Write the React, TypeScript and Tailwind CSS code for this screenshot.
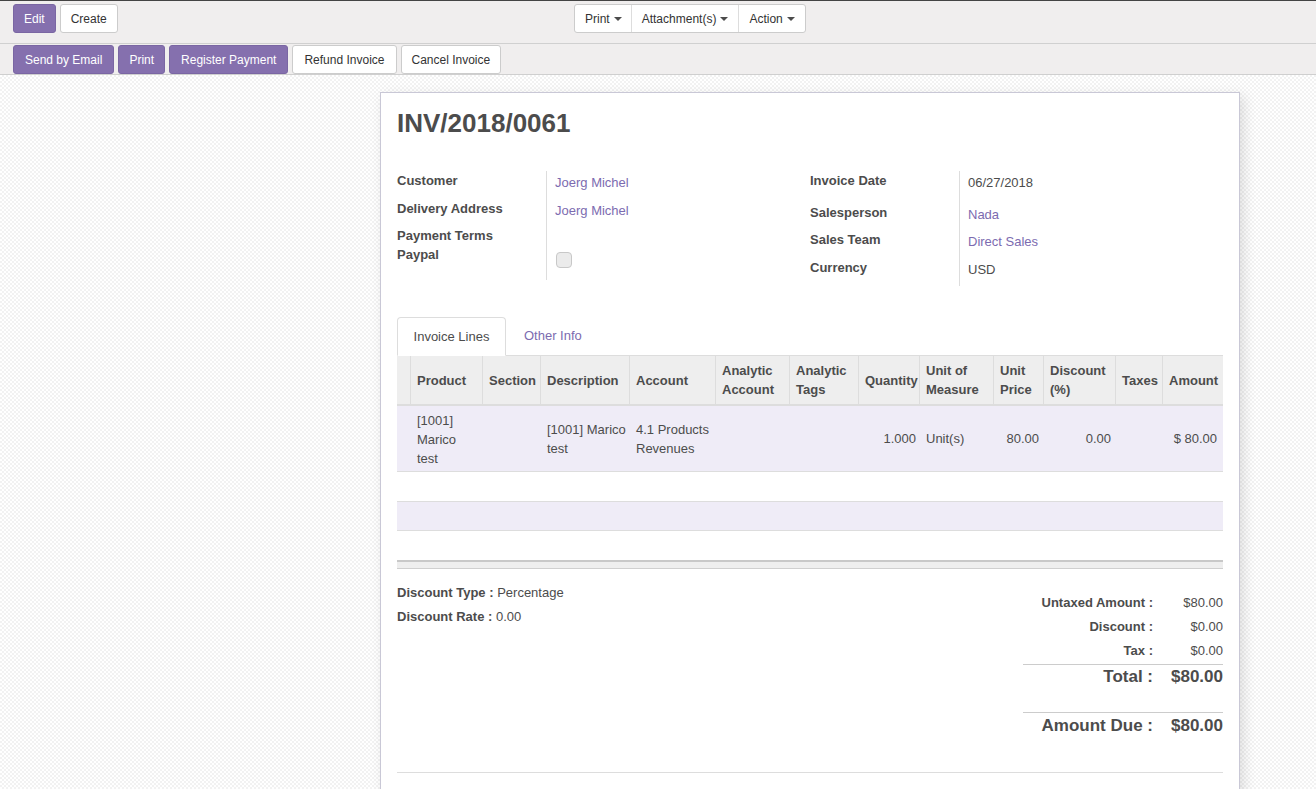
import React from "react";

const PURPLE = "bg-[#8570ae] border-[#7a66a3] text-white";
const WHITE = "bg-white border-[#cccccc] text-[#333333]";

function Btn({ label, primary, px = "px-[11px]" }: { label: string; primary?: boolean; px?: string }) {
  return (
    <button
      className={`h-[29px] ${px} rounded-[3px] border text-[12px] leading-none ${primary ? PURPLE : WHITE}`}
    >
      {label}
    </button>
  );
}

function Caret() {
  return (
    <span className="inline-block ml-[4px] align-middle w-0 h-0 border-l-[4px] border-r-[4px] border-t-[4px] border-l-transparent border-r-transparent border-t-[#4c4c4c]" />
  );
}

const cols = "grid grid-cols-[13px_72px_58px_89px_86px_74px_69px_61px_74px_50px_72px_47px_60px]";

const headers = [
  "",
  "Product",
  "Section",
  "Description",
  "Account",
  "Analytic Account",
  "Analytic Tags",
  "Quantity",
  "Unit of Measure",
  "Unit Price",
  "Discount (%)",
  "Taxes",
  "Amount",
];

export default function App() {
  return (
    <div className="w-[1316px] h-[789px] overflow-hidden font-['Liberation_Sans',Arial,sans-serif] text-[13px] text-[#4c4c4c] bg-white">
      {/* control panel */}
      <div className="h-[44px] bg-[#f0eeee] border-t border-[#444] border-b border-b-[#d0d0d0] flex items-start pt-[3px] px-[13px]">
        <div className="flex gap-[4px] w-[561px]">
          <Btn label="Edit" primary px="px-[10px]" />
          <Btn label="Create" px="px-[10px]" />
        </div>
        <div className="flex h-[29px] border border-[#cccccc] rounded-[3px] bg-white text-[12px] text-[#333]">
          <div className="pl-[10px] pr-[9px] flex items-center border-r border-[#dddddd]">
            Print
            <Caret />
          </div>
          <div className="px-[10px] flex items-center border-r border-[#dddddd]">
            Attachment(s)
            <Caret />
          </div>
          <div className="px-[10px] flex items-center">
            Action
            <Caret />
          </div>
        </div>
      </div>
      {/* status bar */}
      <div className="h-[31px] bg-[#f0eeee] border-b border-[#cfcfcf] flex items-start pt-[1px] px-[13px] gap-[4px]">
        <Btn label="Send by Email" primary />
        <Btn label="Print" primary px="px-[10px]" />
        <Btn label="Register Payment" primary />
        <Btn label="Refund Invoice" px="px-[11px]" />
        <Btn label="Cancel Invoice" px="px-[10px]" />
      </div>
      {/* sheet background */}
      <div className="h-[714px] bg-[conic-gradient(#f2f2f2_25%,#ffffff_0_50%,#f2f2f2_0_75%,#ffffff_0)] bg-[length:4px_4px] pt-[17px] pl-[380px]">
        <div className="w-[860px] h-[720px] bg-white border border-[#c9c8d6] shadow-[4px_4px_12px_rgba(0,0,0,0.12)] px-[16px] pt-[14px]">
          <h1 className="text-[26px] font-bold leading-[32px] text-[#4c4c4c]">INV/2018/0061</h1>

          {/* groups */}
          <div className="flex mt-[32px]">
            <div className="w-[413px] flex">
              <div className="w-[149px] font-bold">
                <div className="h-[28px]">Customer</div>
                <div className="h-[27px]">Delivery Address</div>
                <div className="h-[19px]">Payment Terms</div>
                <div className="h-[20px]">Paypal</div>
              </div>
              <div className="border-l border-[#dddddd] pl-[8px] h-[109px] text-[#7c6bb0] pt-[2px]">
                <div className="h-[28px]">Joerg Michel</div>
                <div className="h-[27px]">Joerg Michel</div>
                <div className="h-[24px]" />
                <div className="w-[16px] h-[16px] rounded-[4px] border border-[#c8c8c8] bg-[#ebebeb] ml-[1px]" />
              </div>
            </div>
            <div className="flex">
              <div className="w-[149px] font-bold">
                <div className="h-[32px]">Invoice Date</div>
                <div className="h-[27px]">Salesperson</div>
                <div className="h-[28px]">Sales Team</div>
                <div className="h-[20px]">Currency</div>
              </div>
              <div className="border-l border-[#dddddd] pl-[8px] h-[115px] pt-[2px]">
                <div className="h-[32px]">06/27/2018</div>
                <div className="h-[27px] text-[#7c6bb0]">Nada</div>
                <div className="h-[28px] text-[#7c6bb0]">Direct Sales</div>
                <div>USD</div>
              </div>
            </div>
          </div>

          {/* tabs */}
          <div className="mt-[30px] flex h-[39px] items-end">
            <div className="h-[39px] w-[109px] border border-[#dddddd] border-b-white rounded-t-[4px] flex items-center justify-center bg-white relative top-[1px]">
              Invoice Lines
            </div>
            <div className="h-[39px] px-[18px] flex items-center text-[#7c6bb0]">Other Info</div>
          </div>

          {/* table */}
          <div className="w-[826px] border-t border-[#dddddd]">
            <div className={`${cols} h-[50px] bg-[#eeeeee] border-b-2 border-[#dddddd] font-bold leading-[19px]`}>
              {headers.map((h, i) => (
                <div
                  key={i}
                  className={`flex items-center ${i === 0 ? "" : "border-l border-[#dddddd] pl-[6px]"}`}
                >
                  {h}
                </div>
              ))}
            </div>
            <div className={`${cols} h-[66px] bg-[#efecf7] border-b border-[#dddddd] leading-[19px]`}>
              <div />
              <div className="pl-[7px] pt-[5px]">
                [1001]
                <br />
                Marico
                <br />
                test
              </div>
              <div />
              <div className="pl-[7px] flex items-center">[1001] Marico test</div>
              <div className="pl-[7px] flex items-center">4.1 Products Revenues</div>
              <div />
              <div />
              <div className="px-[3px] flex items-center justify-end">1.000</div>
              <div className="px-[7px] flex items-center">Unit(s)</div>
              <div className="px-[4px] flex items-center justify-end">80.00</div>
              <div className="px-[4px] flex items-center justify-end">0.00</div>
              <div />
              <div className="px-[5px] flex items-center justify-end">$ 80.00</div>
            </div>
            <div className="h-[29px]" />
            <div className="h-[30px] bg-[#efecf7] border-t border-b border-[#dddddd]" />
            <div className="h-[29px]" />
            <div className="h-[9px] bg-[#eeeeee] border-t-2 border-[#c8c8c8] border-b border-b-[#cfcfcf]" />
          </div>

          {/* footer */}
          <div className="flex justify-between mt-[12px]">
            <div className="leading-[24px]">
              <div>
                <span className="font-bold">Discount Type :</span> Percentage
              </div>
              <div>
                <span className="font-bold">Discount Rate :</span> 0.00
              </div>
            </div>
            <div className="w-[200px] mt-[10px]">
              <div className="flex justify-end h-[24px] items-center">
                <span className="font-bold">Untaxed Amount :</span>
                <span className="w-[70px] text-right">$80.00</span>
              </div>
              <div className="flex justify-end h-[24px] items-center">
                <span className="font-bold">Discount :</span>
                <span className="w-[70px] text-right">$0.00</span>
              </div>
              <div className="flex justify-end h-[24px] items-center">
                <span className="font-bold">Tax :</span>
                <span className="w-[70px] text-right">$0.00</span>
              </div>
              <div className="border-t border-[#cccccc] mt-[1px] flex justify-end h-[25px] items-center text-[17px] font-bold">
                <span>Total :</span>
                <span className="w-[70px] text-right">$80.00</span>
              </div>
              <div className="border-t border-[#cccccc] mt-[23px] flex justify-end h-[26px] items-center text-[17px] font-bold">
                <span>Amount Due :</span>
                <span className="w-[70px] text-right">$80.00</span>
              </div>
            </div>
          </div>
          <div className="mt-[34px] border-t border-[#dddddd]" />
        </div>
      </div>
    </div>
  );
}
